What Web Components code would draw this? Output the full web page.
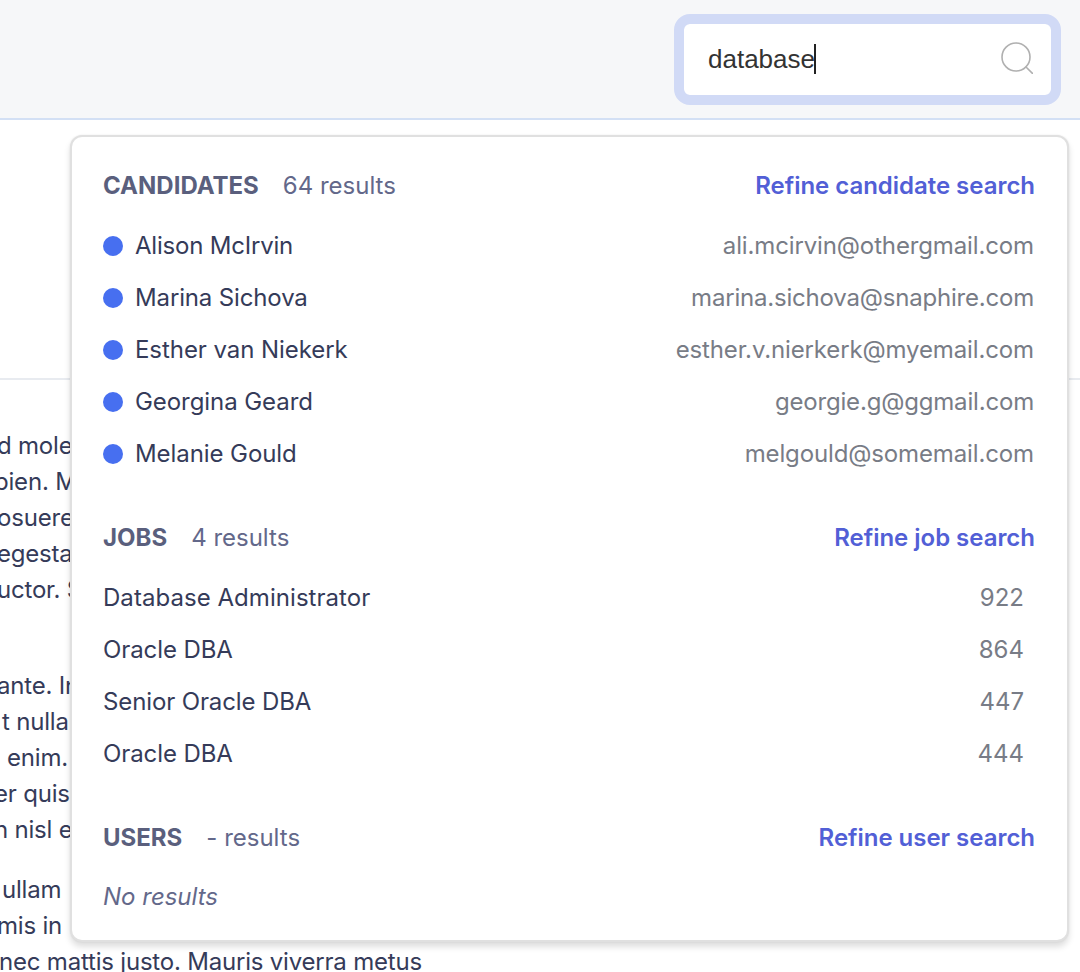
<!DOCTYPE html>
<html><head><meta charset="utf-8"><style>
html,body{margin:0;padding:0;background:#fff;height:972px;overflow:hidden}
body{font-family:Inter,"Liberation Sans",sans-serif}
</style></head><body>
<app-page>
<search-box slot="search" value="database"></search-box>
<text-line slot="text" style="--x:-3px">d molestie</text-line>
<text-line slot="text" style="--x:-6px">pien. Maecenas</text-line>
<text-line slot="text" style="--x:-3px">osuere nibh</text-line>
<text-line slot="text" style="--x:-3px">egestas nulla</text-line>
<text-line slot="text" style="--x:-3px">uctor. Sed</text-line>
<text-line slot="text" style="--x:-3px;--top:60px">ante. Integer</text-line>
<text-line slot="text" style="--x:2px">t nullam</text-line>
<text-line slot="text" style="--x:7px">enim. Sed</text-line>
<text-line slot="text" style="--x:-6px">er quis</text-line>
<text-line slot="text" style="--x:-6px">n nisl eu</text-line>
<text-line slot="text" style="--x:2px;--top:24px">ullam</text-line>
<text-line slot="text" style="--x:-3px">mis in</text-line>
<text-line slot="text" style="--x:-1px">nec mattis justo. Mauris viverra metus</text-line>
<results-panel slot="panel">
  <result-group title="CANDIDATES" count="64 results" action="Refine candidate search">
    <result-row dot style="--ls:-.2px" main="Alison McIrvin" side="ali.mcirvin@othergmail.com"></result-row>
    <result-row dot style="--ls:-.14px;--es:-.2px" main="Marina Sichova" side="marina.sichova@snaphire.com"></result-row>
    <result-row dot style="--ls:-.06px" main="Esther van Niekerk" side="esther.v.nierkerk@myemail.com"></result-row>
    <result-row dot style="--ls:-.07px;--es:-.18px" main="Georgina Geard" side="georgie.g@ggmail.com"></result-row>
    <result-row dot style="--ls:-.08px" main="Melanie Gould" side="melgould@somemail.com"></result-row>
  </result-group>
  <result-group title="JOBS" count="4 results" action="Refine job search">
    <result-row style="--ls:.05px" main="Database Administrator" side="922" num></result-row>
    <result-row style="--ls:-.1px" main="Oracle DBA" side="864" num></result-row>
    <result-row style="--ls:-.12px" main="Senior Oracle DBA" side="447" num></result-row>
    <result-row style="--ls:-.1px" main="Oracle DBA" side="444" num></result-row>
  </result-group>
  <result-group title="USERS" count="- results" action="Refine user search">
    <result-empty>No results</result-empty>
  </result-group>
</results-panel>
</app-page>
<script>
const def=(name,html,setup)=>customElements.define(name,class extends HTMLElement{
  connectedCallback(){ if(this.shadowRoot) return;
    const r=this.attachShadow({mode:'open'}); r.innerHTML=html;
    if(setup) setup(this,r); }
});
def('app-page',`<style>
:host{display:block;position:relative;width:1080px;height:972px;overflow:hidden;background:#fff;color:#2f3553}
.head{background:#f6f7f9;border-bottom:2px solid #d3e0f5;display:flex;justify-content:flex-end;padding:14px 19px 0 0;height:104px}
.band{height:258px;border-bottom:2px solid #e8ebf0}
.text{padding-top:48px;display:flex;flex-direction:column}
.over{position:absolute;left:70px;top:135px}
</style>
<div class="head"><slot name="search"></slot></div>
<div class="band"></div>
<div class="text"><slot name="text"></slot></div>
<div class="over"><slot name="panel"></slot></div>`);
def('search-box',`<style>
:host{display:block;width:387px;height:91px;box-sizing:border-box;border:10px solid #d1daf6;border-radius:16px;background:#fff;background-clip:padding-box}
.in{display:flex;align-items:center;justify-content:space-between;height:71px;padding:0 18px 0 24px;font:26px "Liberation Sans",Arial,sans-serif;color:#333}
.v{display:flex;align-items:center}
.caret{display:inline-block;width:2px;height:30px;background:#222;margin:0 0 2px -1px}
svg{display:block;margin-bottom:3px}
</style><div class="in"><span class="v"><span id="v"></span><span class="caret"></span></span>
<svg width="32" height="32" viewBox="0 0 32 32" fill="none" stroke="#b0b0b0" stroke-width="1.6"><circle cx="15" cy="15" r="14"/><path d="M25 25l6.5 6.5" stroke-linecap="round"/></svg></div>`,
(h,r)=>{r.getElementById('v').textContent=h.getAttribute('value')});
def('text-line',`<style>
:host{display:block;height:36px;line-height:36px;font-size:24px;letter-spacing:-.2px;white-space:nowrap;color:#353b59;margin-left:var(--x,0);margin-top:var(--top,0)}
</style><slot></slot>`);
def('results-panel',`<style>
:host{display:block;width:999px;height:807px;box-sizing:border-box;background:#fff;border:2px solid #e0e0e0;border-radius:12px;box-shadow:0 5px 6px rgba(0,0,0,.13),0 0 2px rgba(0,0,0,.08);padding:30px 33px 0 31px;display:flex;flex-direction:column;gap:48px}
</style><slot></slot>`);
def('result-group',`<style>
:host{display:block}
.h{display:flex;align-items:center;height:36px;margin-bottom:24px;font-size:24px}
b{font-weight:700;color:#5a5f7d}
.c{margin-left:24px;color:#63688a}
a{margin:0 -1px 0 auto;font-weight:600;color:#525fd6;text-decoration:none;letter-spacing:-.03px}
.list{display:flex;flex-direction:column;gap:16px}
</style><div class="h"><b id="t"></b><span class="c" id="c"></span><a id="a" href="#"></a></div><div class="list"><slot></slot></div>`,
(h,r)=>{r.getElementById('t').textContent=h.getAttribute('title');r.getElementById('c').textContent=h.getAttribute('count');r.getElementById('a').textContent=h.getAttribute('action');h.removeAttribute('title')});
def('result-row',`<style>
:host{display:flex;align-items:center;height:36px;font-size:24px;color:#353b59}
.d{width:20px;height:20px;border-radius:50%;background:#476ff0;margin:2px 12px 0 0;flex:none}
#m{letter-spacing:var(--ls,0)}
.s{margin-left:auto;color:#787c86;letter-spacing:var(--es,-.13px)}
:host([num]) .s{margin-right:10px;letter-spacing:0}
</style><span class="d" id="d"></span><span id="m"></span><span class="s" id="s"></span>`,
(h,r)=>{if(!h.hasAttribute('dot'))r.getElementById('d').remove();r.getElementById('m').textContent=h.getAttribute('main');r.getElementById('s').textContent=h.getAttribute('side')});
def('result-empty',`<style>
:host{display:block;height:36px;line-height:36px;font-size:24px;font-style:italic;color:#63688a}
</style><slot></slot>`);
</script>
</body></html>
